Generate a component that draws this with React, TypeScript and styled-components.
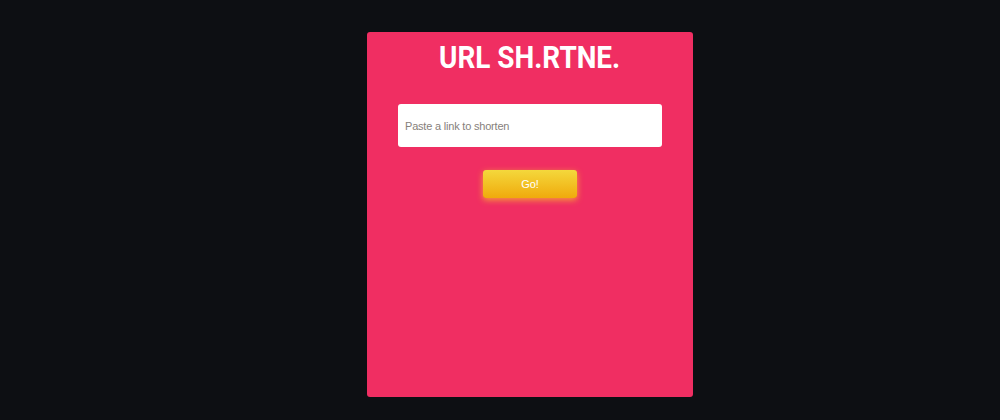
import React, { useState } from 'react';
import styled, { createGlobalStyle } from 'styled-components';

const GlobalStyle = createGlobalStyle`
  html, body {
    margin: 0;
    padding: 0;
    background: #0d0f13;
  }
  body {
    font-family: Roboto, "Liberation Sans", sans-serif;
  }
`;

export default function App() {
  const [url, setUrl] = useState('');

  return (
    <>
      <GlobalStyle />
      <Page>
        <Card>
          <Title>URL SH.RTNE.</Title>
          <LinkInput
            type="text"
            placeholder="Paste a link to shorten"
            value={url}
            onChange={(e) => setUrl(e.target.value)}
          />
          <GoButton type="button">Go!</GoButton>
        </Card>
      </Page>
    </>
  );
}

const Page = styled.div`
  height: 420px;
  display: flex;
  justify-content: flex-start;
  align-items: flex-start;
  padding: 32px 0 0 367px;
  box-sizing: border-box;
`;

const Card = styled.div`
  width: 326px;
  height: 365px;
  background-color: #f02e62;
  border-radius: 3px;
  display: flex;
  flex-direction: column;
  align-items: center;
  box-sizing: border-box;
`;

const Title = styled.h1`
  margin: 8px 0 0;
  color: #ffffff;
  font-family: Roboto, "Liberation Sans", sans-serif;
  font-weight: 700;
  font-size: 31px;
  line-height: 36px;
  transform: scaleX(0.9);
`;

const LinkInput = styled.input`
  margin-top: 28px;
  width: 264px;
  height: 43px;
  box-sizing: border-box;
  border: none;
  border-radius: 3px;
  padding: 0 7px;
  font-family: "Liberation Sans", Arial, sans-serif;
  font-size: 11px;
  letter-spacing: -0.2px;
  color: #333;
  background: #ffffff;
  outline: none;

  &::placeholder {
    color: #86807b;
  }
`;

const GoButton = styled.button`
  margin-top: 23px;
  width: 94px;
  height: 28px;
  border: none;
  border-radius: 3px;
  background: linear-gradient(to bottom, #f4d83c, #f0aa0c);
  box-shadow: 0 2px 6px rgba(245, 200, 40, 0.75);
  color: #ffffff;
  font-family: "Liberation Sans", Arial, sans-serif;
  font-size: 11px;
  cursor: pointer;
`;
